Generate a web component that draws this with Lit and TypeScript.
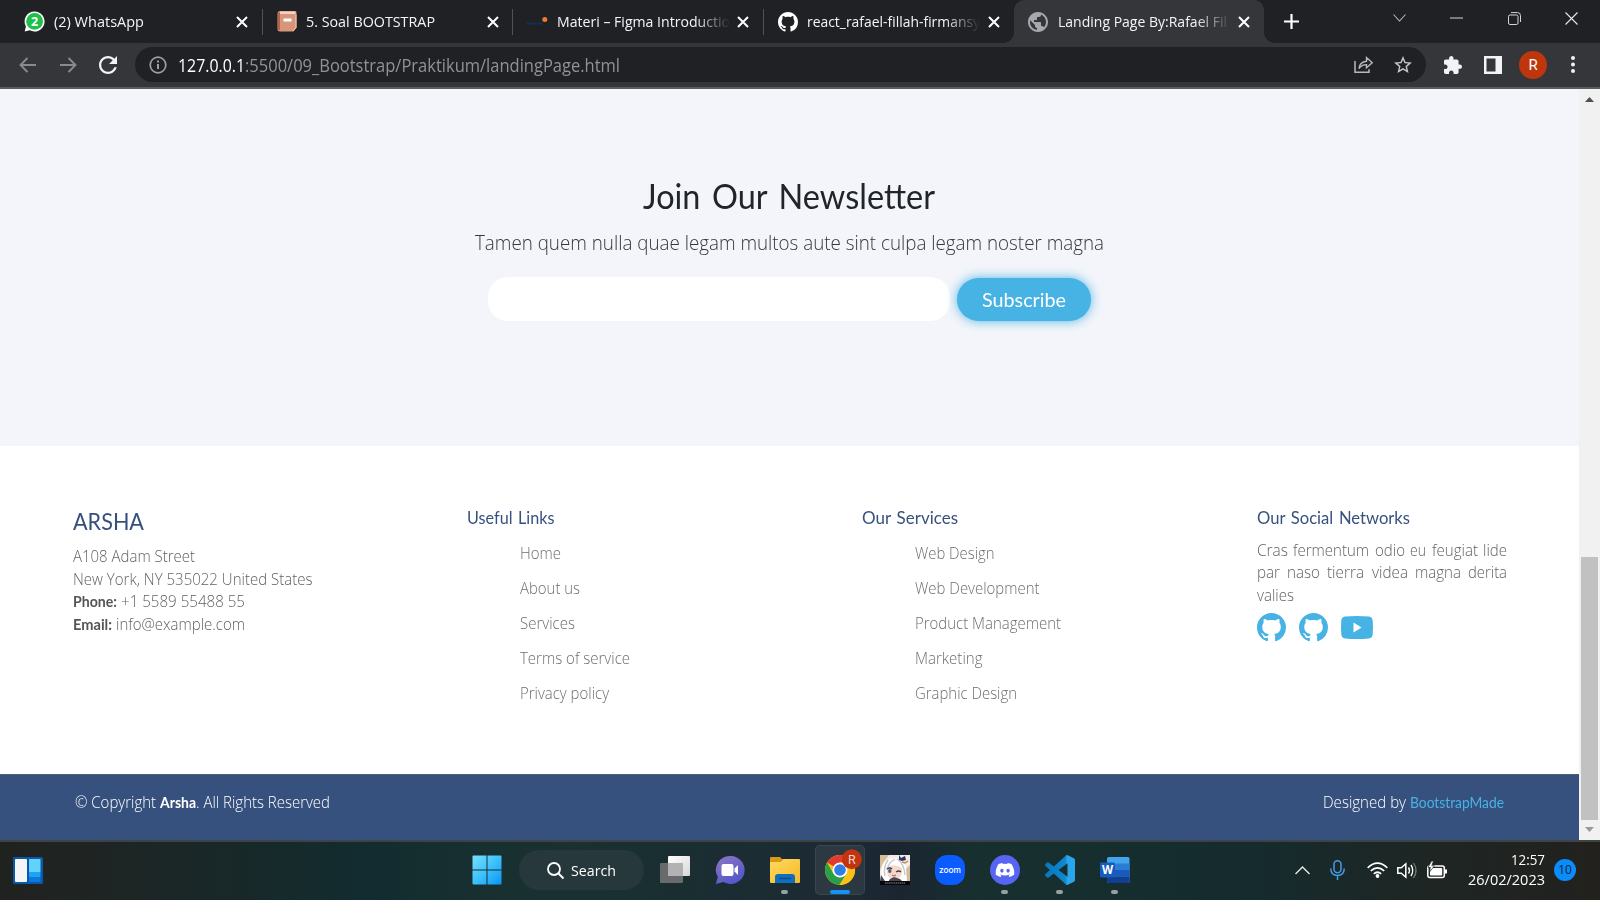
import { LitElement, html, css, svg, nothing } from "lit";
import { customElement, property } from "lit/decorators.js";

const ns = svg;

/** A single run of text condensed or widened to an exact advance width. */
@customElement("fit-text")
class FitText extends LitElement {
  @property({ type: Number }) w = 100;
  static styles = css`
    :host { display: inline-block; white-space: pre; width: max-content; flex: none; }
    .run { display: inline-block; transform-origin: 0 50%; }
  `;
  render() { return html`<span class="run"><slot></slot></span>`; }
  firstUpdated() {
    const run = this.renderRoot.querySelector(".run") as HTMLElement;
    const natural = run.getBoundingClientRect().width;
    if (natural > 0) {
      run.style.transform = `scaleX(${this.w / natural})`;
      this.style.width = `${this.w}px`;
    }
  }
}

const t = (w: number, s: string) => html`<fit-text w=${w}>${s}</fit-text>`;

const github = ns`<path d="M8 0C3.58 0 0 3.58 0 8c0 3.54 2.29 6.53 5.47 7.59.4.07.55-.17.55-.38 0-.19-.01-.82-.01-1.49-2.01.37-2.53-.49-2.69-.94-.09-.23-.48-.94-.82-1.13-.28-.15-.68-.52-.01-.53.63-.01 1.08.58 1.23.82.72 1.21 1.87.87 2.33.66.07-.52.28-.87.51-1.07-1.78-.2-3.64-.89-3.64-3.95 0-.87.31-1.59.82-2.15-.08-.2-.36-1.02.08-2.12 0 0 .67-.21 2.2.82.64-.18 1.32-.27 2-.27.68 0 1.36.09 2 .27 1.53-1.04 2.2-.82 2.2-.82.44 1.1.16 1.92.08 2.12.51.56.82 1.27.82 2.15 0 3.07-1.87 3.75-3.65 3.95.29.25.54.73.54 1.48 0 1.07-.01 1.93-.01 2.2 0 .21.15.46.55.38A8.013 8.013 0 0016 8c0-4.42-3.58-8-8-8z"/>`;

const icon = (w: number, h: number, box: string, body: unknown, fill = "none") =>
  html`<svg width=${w} height=${h} viewBox=${box} fill=${fill}>${body}</svg>`;

const favicons = [
  icon(21, 21, "0 0 21 21", ns`<path d="M10.5 .5a10 10 0 1 1-4.7 18.8L.7 20.5l1.2-5A10 10 0 0 1 10.5 .5z" fill="#fff"/><circle cx="10.6" cy="10.4" r="8.4" fill="#1fbf4a"/><text x="10.6" y="15" text-anchor="middle" font-family="Open Sans, sans-serif" font-weight="700" font-size="12.5" fill="#fff">2</text>`),
  icon(20, 21, "0 0 20 21", ns`<path d="M3 0h15q1.500 0 1.500 1.500v15l-3 4H3q-2.500 0-2.500-2.500V3Q.5 0 3 0z" fill="#d9957a"/><path d="M3 .5h15.500v2.500H3z" fill="#f1d3c6"/><path d="M1 3q0-2 2-2v18.500q-2 0-2-2z" fill="#b5634c"/><path d="M19 3.500v13l-2.800 3.500" stroke="#f1cdbd" stroke-width="1"/><rect x="6.500" y="7.500" width="8" height="3" fill="#fff"/>`),
  icon(20, 20, "0 0 20 20", ns`<path d="M0 11.500h16" stroke="#14305c" stroke-width="1.800" stroke-dasharray="3 .7"/><circle cx="17.800" cy="7.500" r="2.500" fill="#ef7a2d"/>`),
  icon(20, 20, "0 0 16 16", github, "#fff"),
  icon(20, 20, "2 2 20 20", ns`<path d="M12 2C6.480 2 2 6.480 2 12s4.480 10 10 10 10-4.480 10-10S17.520 2 12 2zm-1 17.930c-3.950-.49-7-3.850-7-7.930 0-.62.08-1.210.21-1.790L9 15v1c0 1.100.9 2 2 2v1.930zm6.900-2.540c-.26-.81-1-1.390-1.900-1.390h-1v-3c0-.55-.45-1-1-1H8v-2h2c.55 0 1-.45 1-1V7h2c1.100 0 2-.9 2-2v-.41c2.930 1.190 5 4.060 5 7.410 0 2.080-.8 3.970-2.100 5.390z"/>`, "#a5a9ae"),
];

const tabs: [string, number][] = [
  ["(2) WhatsApp", 90],
  ["5. Soal BOOTSTRAP", 129],
  ["Materi – Figma Introductio", 173],
  ["react_rafael-fillah-firmansy", 173],
  ["Landing Page By:Rafael Fil", 169],
];

const close = icon(12, 12, "0 0 12 12", ns`<path d="M1 1l10 10M11 1L1 11" stroke="#fff" stroke-width="2"/>`);

const apps: { cls?: string; dot?: string; art: unknown }[] = [
  { art: ns`<defs><linearGradient id="tv" x2="1" y2="1"><stop stop-color="#fff"/><stop offset="1" stop-color="#d8d8d8"/></linearGradient></defs><rect x="8" y="1" width="22" height="20" rx="1" fill="url(#tv)"/><rect x="0" y="8" width="23" height="20" rx="1" fill="#737373" fill-opacity=".88"/><path d="M8 8h15v13H8z" fill="#b2b2b2"/>` },
  { art: ns`<defs><linearGradient id="ch" x2=".6" y2="1"><stop stop-color="#8f78c4"/><stop offset="1" stop-color="#5158c9"/></linearGradient></defs><path d="M15.500 1a14 14 0 1 1-7 26L.8 29l2-7A14 14 0 0 1 15.500 1z" fill="url(#ch)"/><rect x="6.500" y="9" width="12" height="12" rx="2" fill="#fff"/><path d="M19.500 13.500l3.500-3.500v10l-3.500-3.500z" fill="#fff"/>` },
  { dot: "dot", art: ns`<defs><linearGradient id="fo" x2="1" y2="1"><stop stop-color="#ffd95e"/><stop offset="1" stop-color="#f5b92b"/></linearGradient></defs><path d="M0 3q0-1 1-1h9l3 3h-1L9 8H0z" fill="#d89a16"/><path d="M0 7h10l3-3h16q1 0 1 1v22q0 1-1 1H1q-1 0-1-1z" fill="url(#fo)"/><path d="M5 28v-6q0-3 3-3h14q3 0 3 3v6z" fill="#0f6fbd"/><path d="M9 23.500h12" stroke="#0b4d8c" stroke-width="1.500"/>` },
  { cls: "current", dot: "dot wide", art: ns`<circle cx="15" cy="15" r="15" fill="#fbc117"/><path d="M15 15L2 7.500A15 15 0 0 1 28 7.500H15z" fill="#e33b2e"/><path d="M2 7.500A15 15 0 0 0 14.500 30l7-11.300L15 15l-6.500 3.750z" fill="#2b9f48"/><path d="M15 7.500h13A15 15 0 0 1 14.500 30l7-11.250z" fill="#fbc117"/><circle cx="15" cy="15" r="7.500" fill="#fff"/><circle cx="15" cy="15" r="5.800" fill="#2f7de9"/><circle cx="26.800" cy="4.200" r="10" fill="#c2330f"/><text x="26.800" y="9" text-anchor="middle" font-size="12.500" font-family="Roboto, sans-serif" fill="#f6d4c8">R</text>` },
  { art: ns`<rect width="30" height="30" fill="#f2ece4"/><path d="M0 0h9L3 8 0 15zM30 10v17h-5l-3-9z" fill="#d4bd99"/><path d="M3 9Q7 2 16 3q9 1 10 10l1 13H3q-3-9 0-17z" fill="#fff"/><path d="M7 12q7-4 15 1 1 8-5 11h-6q-5-3-4-12z" fill="#f5d8c6"/><path d="M8 5Q3 12 5 21M15 4q-7 4-8 11M17 4q7 4 8 16" stroke="#c9c4ca" stroke-width="1.400"/><path d="M7 14q3-2 5 0M16 17q3-2 5 0" stroke="#3e3d5b" stroke-width="1.300"/><ellipse cx="9.800" cy="16" rx="1.700" ry="2" fill="#505d8b"/><path d="M12 20q2 2 4 0" stroke="#a0564d"/><path d="M19 0l2 3 4-2 1 4-4 1-3-1z" fill="#2e3566"/><path d="M22 7l3 1 3-2" stroke="#c28559" stroke-width="1.500"/><path d="M1 20l4 6H0zM10 24l4-2 6 2 3 3H8z" fill="#4b4559"/><rect y="26" width="30" height="4" fill="#070707"/><path d="M5 28h20" stroke="#8d8d8d" stroke-width="1.200" stroke-dasharray="1.500 .6"/>` },
  { art: ns`<rect width="30" height="30" rx="12" fill="#0b5cff"/><text x="15" y="18" text-anchor="middle" font-size="9" font-weight="500" textLength="22" lengthAdjust="spacingAndGlyphs" font-family="Inter, sans-serif" fill="#fff">zoom</text>` },
  { dot: "dot", art: ns`<circle cx="15" cy="15" r="15" fill="#5865f2"/><path transform="translate(5.700 5.700) scale(.775)" fill="#fff" d="M20.317 4.370a19.790 19.790 0 00-4.885-1.515.074.074 0 00-.079.037c-.21.375-.444.864-.608 1.250a18.270 18.270 0 00-5.487 0 12.640 12.640 0 00-.617-1.250.077.077 0 00-.079-.037A19.740 19.740 0 003.677 4.370a.07.07 0 00-.032.028C.533 9.046-.32 13.580.099 18.058a.082.082 0 00.031.056 19.900 19.900 0 005.993 3.030.078.078 0 00.084-.028 14.090 14.090 0 001.226-1.994.076.076 0 00-.042-.106 13.110 13.110 0 01-1.872-.892.077.077 0 01-.008-.128c.126-.094.252-.192.372-.291a.074.074 0 01.078-.011c3.928 1.793 8.180 1.793 12.061 0a.074.074 0 01.079.01c.12.099.246.198.373.292a.077.077 0 01-.007.128 12.300 12.300 0 01-1.873.891.077.077 0 00-.041.107c.36.698.772 1.363 1.225 1.993a.076.076 0 00.084.029 19.840 19.840 0 006.002-3.030.077.077 0 00.032-.055c.5-5.177-.838-9.674-3.549-13.660a.061.061 0 00-.031-.029zM8.020 15.331c-1.183 0-2.157-1.086-2.157-2.419s.955-2.419 2.157-2.419c1.211 0 2.176 1.095 2.157 2.419 0 1.333-.956 2.419-2.157 2.419zm7.975 0c-1.183 0-2.157-1.086-2.157-2.419s.955-2.419 2.157-2.419c1.211 0 2.176 1.095 2.157 2.419 0 1.333-.946 2.419-2.157 2.419z"/>` },
  { dot: "dot", art: ns`<defs><linearGradient id="vs" x2="1"><stop stop-color="#0877bd"/><stop offset=".68" stop-color="#1087cf"/><stop offset=".74" stop-color="#29a5ec"/></linearGradient></defs><path transform="scale(1.250)" fill="url(#vs)" d="M23.150 2.587L18.210.21a1.494 1.494 0 0 0-1.705.29l-9.460 8.630-4.120-3.128a.999.999 0 0 0-1.276.057L.327 7.261A1 1 0 0 0 .326 8.740L3.899 12 .326 15.260a1 1 0 0 0 .001 1.479L1.650 17.940a.999.999 0 0 0 1.276.057l4.120-3.128 9.460 8.630a1.492 1.492 0 0 0 1.704.29l4.942-2.377A1.500 1.500 0 0 0 24 20.060V3.939a1.500 1.500 0 0 0-.85-1.352zm-5.146 14.861L10.826 12l7.178-5.448v10.896z"/>` },
  { dot: "dot", art: ns`<rect x="7" y="2" width="22.500" height="26" rx="1.500" fill="#41a5ee"/><path d="M7 8.500h22.500V15H7z" fill="#2b7cd3"/><path d="M7 15h22.500v6.500H7z" fill="#185abd"/><path d="M7 21.500h22.500v5q0 1.500-1.500 1.500H8.500Q7 28 7 26.500z" fill="#103f91"/><rect y="7.500" width="15" height="15" rx="1.300" fill="#185abd"/><text x="7.500" y="19" text-anchor="middle" font-size="11.500" font-weight="700" font-family="Open Sans, sans-serif" fill="#fff">W</text>` },
];

@customElement("app-root")
class AppRoot extends LitElement {
  static styles = css`
    :host { display: flex; flex-direction: column; width: 1600px; height: 900px; overflow: hidden; font-family: "Open Sans", "Noto Sans", sans-serif; }
    * { box-sizing: border-box; }
    svg { display: block; flex: none; overflow: visible; }

    .strip { height: 43px; background: #202124; display: flex; padding-left: 12.5px; color: #f4f5f6; font-size: 15px; line-height: 40px; }
    .tab { width: 250.4px; height: 43px; flex: none; display: flex; align-items: center; padding-left: 13.5px; position: relative; }
    .tab:first-child { padding-left: 10.5px; }
    .tab:first-child .label { width: 175px; padding-left: 1px; }
    .tab .fav { width: 30px; flex: none; padding-left: .5px; }
    .tab .label { width: 173px; overflow: hidden; flex: none; height: 42px; }
    .tab .label.fade { -webkit-mask-image: linear-gradient(90deg, #000 138px, transparent 173px); mask-image: linear-gradient(90deg, #000 138px, transparent 173px); }
    .tab .x { margin-left: 7.500px; }
    .tab.sep { border-right: 1px solid #4a4c50; border-image: linear-gradient(transparent 10px, #505256 10px, #505256 34px, transparent 34px) 1; }
    .tab.active { background: #35363a; border-radius: 10px 10px 0 0; }
    .tab.active::before, .tab.active::after { content: ""; position: absolute; bottom: 0; width: 10px; height: 10px; }
    .tab.active::before { left: -10px; background: radial-gradient(circle at 0 0, transparent 9.500px, #35363a 10px); }
    .tab.active::after { right: -10px; background: radial-gradient(circle at 100% 0, transparent 9.500px, #35363a 10px); }
    .plus { width: 54px; height: 42px; display: grid; place-items: center; flex: none; }
    .win { margin-left: auto; display: flex; height: 36px; }
    .win div { width: 57.300px; display: grid; place-items: center; }

    .toolbar { height: 46px; background: #35363a; border-bottom: 2px solid #5b5c60; display: flex; align-items: center; padding: 0 7px 1px 7.500px; }
    .cell { width: 40px; display: grid; place-items: center; flex: none; }
    .omni { flex: 1; height: 35px; border-radius: 18px; background: #202124; margin: 0 7px 0 7.500px; display: flex; align-items: center; padding: 0 3px 0 14px; font-size: 17.500px; line-height: 34px; color: #8f9397; }
    .omni .host { color: #fff; margin-left: 11px; }
    .omni .end { margin-left: auto; display: flex; }
    .avatar { width: 28px; height: 28px; border-radius: 50%; background: #bf360c; color: #fff; font: 15px/28px "Roboto", sans-serif; text-align: center; }

    .view { height: 751px; display: flex; background: #fff; }
    .page { width: 1579px; display: flex; flex-direction: column; }
    .bar { width: 21px; background: #f1f1f1; display: flex; flex-direction: column; align-items: center; padding: 8px 0 8px; }
    .bar .thumb { width: 17px; height: 263px; background: #c1c1c1; margin-top: auto; margin-bottom: 7px; }

    .news { height: 357px; background: #f3f5fa; display: flex; flex-direction: column; align-items: center; padding-top: 81px; color: #212529; }
    .news h2 { margin: 0 2px 0 0; font: 400 34.500px/52px "Lato", sans-serif; height: 52px; word-spacing: 3.500px; }
    .news p { margin: 0; font-weight: 300; font-size: 20px; line-height: 30px; height: 30px; margin-top: 6px; color: #33383d; }
    .form { display: flex; gap: 7px; margin-top: 19px; height: 44px; align-items: center; }
    .field { width: 462px; height: 44px; border-radius: 20px; background: #fff; }
    .sub { width: 134px; height: 43px; border-radius: 21.500px; background: #47b2e4; box-shadow: 0 0 11px rgba(71, 178, 228, .95); color: #fff; font: 400 20px/42px "Lato", sans-serif; text-align: center; }

    .foot { height: 328px; padding: 60px 0 0 72px; display: grid; grid-template-columns: 395px 395px 395px 250px; color: #626262; font-weight: 300; font-size: 15.500px; }
    .foot h3, .foot h4 { margin: 0; font-family: "Lato", sans-serif; font-weight: 400; color: #37517e; }
    .foot h3 { font-size: 22.500px; line-height: 32px; height: 39px; padding-left: .5px; }
    .foot h4 { font-size: 17.200px; line-height: 24px; height: 29px; word-spacing: 1.500px; }
    .row { line-height: 22.700px; height: 22.700px; display: flex; gap: 4px; padding-left: .5px; }
    .row b { font-family: "Lato", sans-serif; font-weight: 700; color: #555; }
    .links { padding: 5.500px 0 0 53px; display: flex; flex-direction: column; color: #6e6e6e; }
    .links div { height: 35px; line-height: 24px; }
    .just { display: flex; flex-direction: column; line-height: 22.400px; padding-top: 4px; height: 78px; }
    .just div { height: 22.400px; display: flex; justify-content: space-between; width: 250px; }
    .just .last { justify-content: flex-start; }
    .social { display: flex; align-items: center; gap: 12.500px; color: #47b2e4; }
    .social .yt { margin-left: 1px; }
    .copy { flex: 1; background: #37517e; border-top: 1px solid #4a6078; display: flex; justify-content: space-between; padding: 15px 75px 0 75px; color: #fff; font-weight: 300; font-size: 15.500px; line-height: 24px; }
    .copy .brand { font-family: "Lato", sans-serif; font-weight: 700; margin-left: 4px; }
    .copy a { font-family: "Lato", sans-serif; font-weight: 400; color: #47b2e4; margin-left: 4px; }

    .task { height: 60px; border-top: 2px solid #3c4444; background: linear-gradient(90deg, #20221f 0, #1f2423 90px, #122c2f 370px, #193031 500px, #1a2f31 640px, #1c2a34 850px, #1b2531 900px, #17302f 980px, #152b2e 1250px, #1e2624 1420px, #22211e 1600px); display: flex; align-items: center; padding: 0 24px 2px 12.500px; color: #fff; }
    .start { margin-left: 429.500px; margin-right: 17px; }
    .search { width: 125px; height: 40px; border-radius: 20px; background: #26383c; display: flex; align-items: center; padding-left: 28px; gap: 7px; font-size: 15px; line-height: 38px; }
    .apps { display: flex; margin-left: 3px; }
    .app { width: 55px; height: 50px; display: flex; flex-direction: column; align-items: center; padding-top: 10px; position: relative; }
    .tile { width: 50px; height: 50px; border-radius: 5px; background: rgba(255, 255, 255, .07); border: 1px solid rgba(255, 255, 255, .07); padding-top: 9px; display: flex; flex-direction: column; align-items: center; }
    .app.current { padding-top: 0; }
    .dot { width: 7px; height: 4px; border-radius: 2px; background: #98a1a1; margin-top: 5px; }
    .dot.wide { width: 20px; background: #1293f8; }
    .tray { margin-left: auto; display: flex; align-items: center; }
    .mic { margin: 0 22px 0 20px; }
    .spk { margin: 0 10px 0 9px; }
    .clock { width: 98px; display: flex; flex-direction: column; align-items: flex-end; font-size: 15px; line-height: 19px; }
    .clock div { height: 20px; }
    .badge { width: 22px; height: 22px; border-radius: 50%; background: #0a8cfb; color: #10253a; font-size: 12px; line-height: 21px; text-align: center; margin-left: 9px; }
  `;

  render() {
    return html`
      <div class="strip">
        ${tabs.map(([s, w], i) => html`<div class="tab ${i < 3 ? "sep" : ""} ${i === 4 ? "active" : ""}">
          <div class="fav">${favicons[i]}</div>
          <div class="label ${i > 1 ? "fade" : ""}">${t(w, s)}</div>
          <div class="x">${close}</div>
        </div>`)}
        <div class="plus">${icon(15, 15, "0 0 15 15", ns`<path d="M7.500 0v15M0 7.500h15" stroke="#fff" stroke-width="2.200"/>`)}</div>
        <div class="win">
          <div>${icon(13, 8, "0 0 13 8", ns`<path d="M.5 .5l6 6.500 6-6.500" stroke="#b9babb" stroke-width="1.100"/>`)}</div>
          <div>${icon(13, 2, "0 0 13 2", ns`<path d="M0 1h13" stroke="#d5d5d5"/>`)}</div>
          <div>${icon(13, 13, "0 0 13 13", ns`<rect x=".5" y="3" width="9.500" height="9.500" rx="1.500" stroke="#d5d5d5"/><path d="M3 .6h6.500q3 0 3 3V10" stroke="#d5d5d5"/>`)}</div>
          <div>${icon(13, 13, "0 0 13 13", ns`<path d="M.5 .5l12 12M12.500 .5l-12 12" stroke="#e8e8e8" stroke-width="1.100"/>`)}</div>
        </div>
      </div>

      <div class="toolbar">
        <div class="cell">${icon(18, 16, "0 0 18 16", ns`<path d="M17 8H1.500M8.500 1l-7 7 7 7" stroke="#888b8f" stroke-width="1.900"/>`)}</div>
        <div class="cell">${icon(18, 16, "0 0 18 16", ns`<path d="M1 8h15.500M9.500 1l7 7-7 7" stroke="#888b8f" stroke-width="1.900"/>`)}</div>
        <div class="cell">${icon(18, 18, "4 4 16 16", ns`<path d="M17.650 6.350C16.200 4.900 14.210 4 12 4c-4.420 0-7.990 3.580-7.990 8s3.570 8 7.990 8c3.730 0 6.840-2.550 7.730-6h-2.080c-.82 2.330-3.040 4-5.650 4-3.310 0-6-2.690-6-6s2.690-6 6-6c1.660 0 3.140.69 4.220 1.780L13 11h7V4l-2.350 2.350z"/>`, "#f1f3f4")}</div>
        <div class="omni">
          ${icon(18, 18, "0 0 18 18", ns`<circle cx="9" cy="9" r="7.800" stroke="#9aa0a6" stroke-width="1.700"/><path d="M9 8v5M9 4.600v1.900" stroke="#9aa0a6" stroke-width="2"/>`)}
          <span class="host">${t(67, "127.0.0.1")}</span>${t(375, ":5500/09_Bootstrap/Praktikum/landingPage.html")}
          <div class="end">
            <div class="cell">${icon(19, 17, "0 0 19 17", ns`<path d="M1 5v11.200h14v-3" stroke="#b6b9bd" stroke-width="1.500"/><path d="M5 12.500q.5-6.500 7.500-7.300V1.500l5.700 5.200-5.700 5V8.600Q7.500 8.700 5 12.500z" stroke="#b6b9bd" stroke-width="1.400"/>`)}</div>
            <div class="cell">${icon(18, 17, "2 2 20 19", ns`<path d="M22 9.240l-7.190-.62L12 2 9.190 8.630 2 9.240l5.460 4.730L5.820 21 12 17.270 18.180 21l-1.630-7.030L22 9.240zM12 15.400l-3.760 2.270 1-4.280-3.320-2.880 4.380-.38L12 6.100l1.710 4.040 4.380.38-3.320 2.880 1 4.280L12 15.400z"/>`, "#c4c7ca")}</div>
          </div>
        </div>
        <div class="cell">${icon(18, 18, "2 1 21 21", ns`<path d="M20.500 11H19V7c0-1.100-.9-2-2-2h-4V3.500C13 2.120 11.880 1 10.500 1S8 2.120 8 3.500V5H4c-1.100 0-1.990.9-1.990 2v3.800H3.500c1.490 0 2.700 1.210 2.700 2.700s-1.210 2.700-2.700 2.700H2V20c0 1.100.9 2 2 2h3.800v-1.500c0-1.490 1.210-2.700 2.700-2.700 1.490 0 2.700 1.210 2.700 2.700V22H17c1.100 0 2-.9 2-2v-4h1.500c1.380 0 2.500-1.120 2.500-2.500S21.880 11 20.500 11z"/>`, "#f1f3f4")}</div>
        <div class="cell">${icon(18, 18, "0 0 18 18", ns`<path d="M0 0h18v18H0zM2.500 2.500v13h9v-13z" fill="#f1f3f4" fill-rule="evenodd"/>`)}</div>
        <div class="cell"><div class="avatar">R</div></div>
        <div class="cell">${icon(4, 17, "0 0 4 17", ns`<circle cx="2" cy="2" r="2"/><circle cx="2" cy="8.500" r="2"/><circle cx="2" cy="15" r="2"/>`, "#f1f3f4")}</div>
      </div>

      <div class="view">
        <div class="page">
          <div class="news">
            <h2>${t(292, "Join Our Newsletter")}</h2>
            <p>${t(629, "Tamen quem nulla quae legam multos aute sint culpa legam noster magna")}</p>
            <div class="form"><div class="field"></div><div class="sub">${t(84, "Subscribe")}</div></div>
          </div>
          <div class="foot">
            <div>
              <h3>${t(71, "ARSHA")}</h3>
              <div class="row">${t(122, "A108 Adam Street")}</div>
              <div class="row">${t(239.5, "New York, NY 535022 United States")}</div>
              <div class="row"><b>${t(44, "Phone:")}</b>${t(124, "+1 5589 55488 55")}</div>
              <div class="row"><b>${t(39, "Email:")}</b>${t(129, "info@example.com")}</div>
            </div>
            <div>
              <h4>${t(87.5, "Useful Links")}</h4>
              <div class="links">
                <div>${t(41, "Home")}</div><div>${t(60, "About us")}</div><div>${t(55, "Services")}</div><div>${t(110, "Terms of service")}</div><div>${t(89, "Privacy policy")}</div>
              </div>
            </div>
            <div>
              <h4>${t(96, "Our Services")}</h4>
              <div class="links">
                <div>${t(79.5, "Web Design")}</div><div>${t(124.5, "Web Development")}</div><div>${t(146, "Product Management")}</div><div>${t(67.5, "Marketing")}</div><div>${t(102, "Graphic Design")}</div>
              </div>
            </div>
            <div>
              <h4>${t(153, "Our Social Networks")}</h4>
              <div class="just">
                <div>${t(31, "Cras")}${t(76, "fermentum")}${t(30, "odio")}${t(16, "eu")}${t(46, "feugiat")}${t(24, "lide")}</div>
                <div>${t(23, "par")}${t(33, "naso")}${t(37, "tierra")}${t(36, "videa")}${t(46, "magna")}${t(39, "derita")}</div>
                <div class="last">${t(37, "valies")}</div>
              </div>
              <div class="social">
                ${icon(29, 29, "0 0 16 16", github, "#47b2e4")}
                ${icon(29, 29, "0 0 16 16", github, "#47b2e4")}
                <div class="yt">${icon(32, 23, "0 0 32 23", ns`<path d="M4 .6Q16-.5 28 .6q3.400.4 3.700 4 .6 7 0 13.800-.3 3.600-3.700 4-12 1.100-24 0-3.400-.4-3.700-4-.6-7 0-13.800Q.6 1 4 .6z" fill="#47b2e4"/><path d="M12.500 6.500v10l8-5z" fill="#fff"/>`)}</div>
              </div>
            </div>
          </div>
          <div class="copy">
            <div>${t(81, "© Copyright")}<span class="brand">${t(36, "Arsha")}</span>${t(134, ". All Rights Reserved")}</div>
            <div>${t(83, "Designed by")}<a>${t(94, "BootstrapMade")}</a></div>
          </div>
        </div>
        <div class="bar">
          ${icon(9, 5, "0 0 9 5", ns`<path d="M4.500 0L9 5H0z"/>`, "#505050")}
          <div class="thumb"></div>
          ${icon(9, 5, "0 0 9 5", ns`<path d="M0 0h9L4.500 5z"/>`, "#9a9a9a")}
        </div>
      </div>

      <div class="task">
        ${icon(30, 27, "0 0 30 27", ns`<rect width="30" height="27" rx="1.500" fill="#0a59a8"/><rect x="2" y="2" width="12" height="23" rx="1" fill="#f5f5f5"/><path d="M16 2h11.500v13H16z" fill="#62d2fb"/><path d="M16 15h11.500v5H16z" fill="#1fa2f5"/><path d="M16 20h11.500v5H16z" fill="#0a78dd"/>`)}
        <div class="start">${icon(30, 30, "0 0 30 30", ns`<defs><linearGradient id="wn" gradientUnits="userSpaceOnUse" x1="0" y1="0" x2="30" y2="30"><stop stop-color="#7be0fd"/><stop offset=".5" stop-color="#3cc2fb"/><stop offset="1" stop-color="#0a93f5"/></linearGradient></defs><path d="M1.500 .5h13v14H.5v-13q0-1 1-1zM15.500 .5h13q1 0 1 1v13h-14zM.5 15.500h14v14h-13q-1 0-1-1zM15.500 15.500h14v13q0 1-1 1h-13z" fill="url(#wn)"/>`)}</div>
        <div class="search">${icon(17, 17, "0 0 17 17", ns`<circle cx="7" cy="7" r="6" stroke="#fff" stroke-width="1.800"/><path d="M11.500 11.500l5 5" stroke="#fff" stroke-width="2"/>`)}${t(45, "Search")}</div>
        <div class="apps">
          ${apps.map(a => {
            const body = html`${icon(30, 30, "0 0 30 30", a.art)}${a.dot ? html`<div class=${a.dot}></div>` : nothing}`;
            return html`<div class="app ${a.cls ?? ""}">${a.cls ? html`<div class="tile">${body}</div>` : body}</div>`;
          })}
        </div>
        <div class="tray">
          ${icon(15, 9, "0 0 15 9", ns`<path d="M.5 8l7-7 7 7" stroke="#e5e8e8" stroke-width="1.400"/>`)}
          <div class="mic">${icon(15, 20, "0 0 15 20", ns`<rect x="4" y=".8" width="7" height="12" rx="3.500" stroke="#429ce3" stroke-width="1.500"/><path d="M.8 8.500q0 7 6.700 7t6.700-7M7.500 15.500V20" stroke="#429ce3" stroke-width="1.500"/>`)}</div>
          ${icon(21, 16, "0 0 21 16", ns`<path d="M.7 5.800q9.800-9.300 19.600 0M3.800 8.900q6.700-6.200 13.400 0M6.800 11.900q3.700-3.300 7.400 0" stroke="#fff" stroke-width="1.700"/><circle cx="10.500" cy="14" r="1.900" fill="#fff"/>`)}
          <div class="spk">${icon(20, 17, "0 0 20 17", ns`<path d="M.8 5.800h3.500l4.500-4v13.400l-4.500-4H.8z" stroke="#fff" stroke-width="1.500"/><path d="M11.500 5.500q2 3 0 6M14 3q3.500 5.500 0 11" stroke="#fff" stroke-width="1.400"/><path d="M16.500 1q5 7.500 0 15" stroke="#6f7775" stroke-width="1.300"/>`)}</div>
          ${icon(20, 17, "0 0 20 17", ns`<rect x=".8" y="4" width="16.500" height="11.500" rx="2" stroke="#fff" stroke-width="1.500"/><rect x="3" y="6" width="12.200" height="7.500" rx=".8" fill="#fff"/><path d="M18 7.500h2v4h-2z" fill="#fff"/><path d="M4.500-1L1 5.500h2.300L2.500 10 7.500 3.800H4.800L6.500-1z" fill="#fff" stroke="#1e2624" stroke-width=".7"/>`)}
          <div class="clock"><div>${t(34, "12:57")}</div><div>${t(77, "26/02/2023")}</div></div>
          <div class="badge">10</div>
        </div>
      </div>
    `;
  }
}
